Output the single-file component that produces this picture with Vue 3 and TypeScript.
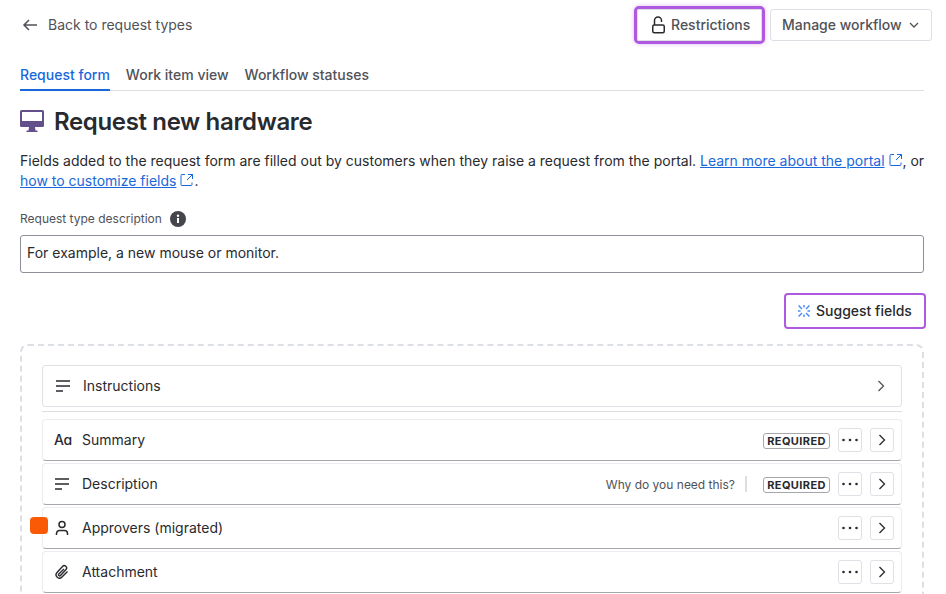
<script setup lang="ts">
interface Field { name: string; icon: string; hint?: string; required?: boolean; marker?: boolean }
const tabs = ['Request form', 'Work item view', 'Workflow statuses']
const fields: Field[] = [
  { name: 'Summary', icon: 'text', required: true },
  { name: 'Description', icon: 'lines', hint: 'Why do you need this?', required: true },
  { name: 'Approvers (migrated)', icon: 'person', marker: true },
  { name: 'Attachment', icon: 'clip' },
]
</script>

<template>
  <div class="page">
    <header class="top">
      <a class="back">
        <svg width="16" height="16" viewBox="0 0 16 16" fill="none" stroke="#505258" stroke-width="1.5"><path d="M15 8H2M7 3 2 8l5 5" /></svg>
        <span>Back to request types</span>
      </a>
      <div class="actions">
        <div class="ring">
          <button class="btn restrict">
            <svg width="16" height="18" viewBox="0 0 16 18" fill="none" stroke="#292a2e" stroke-width="1.5"><path d="M4.500 9V4.500a3.500 3.500 0 0 1 7 0V6" /><rect x="2.750" y="9" width="11.500" height="7.750" rx="1.500" /></svg>
            Restrictions
          </button>
        </div>
        <button class="btn manage">
          Manage workflow
          <svg width="12" height="12" viewBox="0 0 12 12" fill="none" stroke="#505258" stroke-width="1.3"><path d="m2 4 4 4 4-4" /></svg>
        </button>
      </div>
    </header>

    <nav class="tabs">
      <a v-for="(t, i) in tabs" :key="t" class="tab" :class="{ active: i === 0 }">{{ t }}</a>
    </nav>

    <div class="title">
      <svg width="24" height="24" viewBox="0 0 24 24"><rect x="0" y="1" width="24" height="17" rx="1.500" fill="#63508a" /><rect x="2" y="3" width="20" height="9" fill="#fff" /><path d="M9 18h6l.5 3.500h2V23h-11v-1.500h2Z" fill="#63508a" /></svg>
      <h1>Request new hardware</h1>
    </div>

    <p class="intro">
      Fields added to the request form are filled out by customers when they raise a request from the portal.
      <a class="link">Learn more about the portal</a>&nbsp;<svg class="ext" width="14" height="14" viewBox="0 0 14 14" fill="none" stroke="#1868db" stroke-width="1"><path d="M5 1.500H2A1 1 0 0 0 1 2.500v9a1 1 0 0 0 1 1h9a1 1 0 0 0 1-1V9.500M8 1.500h4.500V6M12.500 1.500 7 7" /></svg>, or
      <a class="link">how to customize fields</a>&nbsp;<svg class="ext" width="14" height="14" viewBox="0 0 14 14" fill="none" stroke="#1868db" stroke-width="1"><path d="M5 1.500H2A1 1 0 0 0 1 2.500v9a1 1 0 0 0 1 1h9a1 1 0 0 0 1-1V9.500M8 1.500h4.500V6M12.500 1.500 7 7" /></svg>.
    </p>

    <div class="label">
      Request type description
      <svg width="16" height="16" viewBox="0 0 16 16"><circle cx="8" cy="8" r="8" fill="#44464c" /><rect x="7" y="7" width="2" height="5" fill="#fff" /><circle cx="8" cy="4.800" r="1.200" fill="#fff" /></svg>
    </div>
    <div class="input">For example, a new mouse or monitor.</div>

    <div class="suggest-row">
      <button class="suggest">
        <svg width="12" height="12" viewBox="0 0 12 12" fill="none" stroke="#4c8ef5" stroke-width="1.500"><path d="M.500.500l3.500 3.500M11.500.500 8 4M.500 11.500 4 8M11.500 11.500 8 8M6 0v2.500M6 9.500V12M0 6h2.500M9.500 6H12" /></svg>
        Suggest fields
      </button>
    </div>

    <section class="canvas">
      <div class="instructions">
        <svg class="ficon" width="16" height="16" viewBox="0 0 16 16" fill="none" stroke="#292a2e" stroke-width="1.500"><path d="M1 3h14M1 8h14M1 13h7" /></svg>
        <span class="name">Instructions</span>
        <svg class="chev" width="12" height="12" viewBox="0 0 12 12" fill="none" stroke="#505258" stroke-width="1.300"><path d="m3.500 1 5 5-5 5" /></svg>
      </div>
      <div class="rule"></div>
      <div class="rows">
        <div v-for="f in fields" :key="f.name" class="row">
          <span v-if="f.marker" class="marker"></span>
          <span v-if="f.icon === 'text'" class="aa">Aɑ</span>
          <svg v-else-if="f.icon === 'lines'" class="ficon" width="16" height="16" viewBox="0 0 16 16" fill="none" stroke="#292a2e" stroke-width="1.500"><path d="M1 3h14M1 8h14M1 13h7" /></svg>
          <svg v-else-if="f.icon === 'person'" class="ficon" width="16" height="16" viewBox="0 0 16 16" fill="none" stroke="#292a2e" stroke-width="1.500"><circle cx="8" cy="4.500" r="3" /><path d="M2.500 15v-1.500a3 3 0 0 1 3-3h5a3 3 0 0 1 3 3V15" /></svg>
          <svg v-else class="ficon" width="16" height="16" viewBox="0 0 16 16" fill="none" stroke="#292a2e" stroke-width="1.400"><path d="M13.500 7.500 8 13a3.300 3.300 0 0 1-5-4.500l5.500-6a2.300 2.300 0 0 1 3.500 3l-5.500 6a1.100 1.100 0 0 1-1.700-1.500L10 5" /></svg>
          <span class="name">{{ f.name }}</span>
          <span class="right">
            <span v-if="f.hint" class="hint">{{ f.hint }}</span>
            <span v-if="f.hint" class="sep"></span>
            <span v-if="f.required" class="req">REQUIRED</span>
            <button class="sq" aria-label="More">
              <svg width="16" height="4" viewBox="0 0 16 4" fill="#292a2e"><circle cx="1.500" cy="2" r="1.300" /><circle cx="8" cy="2" r="1.300" /><circle cx="14.500" cy="2" r="1.300" /></svg>
            </button>
            <button class="sq" aria-label="Open">
              <svg width="12" height="12" viewBox="0 0 12 12" fill="none" stroke="#292a2e" stroke-width="1.300"><path d="m3.500 1 5 5-5 5" /></svg>
            </button>
          </span>
        </div>
      </div>
    </section>
  </div>
</template>

<style scoped>
.page {
  width: 946px;
  height: 594px;
  overflow: hidden;
  padding-left: 20px;
  box-sizing: border-box;
  font-family: Inter, "Liberation Sans", sans-serif;
  font-size: 14px;
  line-height: 20px;
  color: #292a2e;
  background: #fff;
}
.top {
  display: flex;
  align-items: center;
  justify-content: space-between;
  width: 912px;
  padding-top: 6px;
  height: 38px;
}
.back {
  display: flex;
  align-items: center;
  gap: 10px;
  padding-left: 2px;
  color: #505258;
}
.actions {
  display: flex;
  align-items: center;
  gap: 5px;
}
.ring {
  border: 3px solid #af59e1;
  border-radius: 5px;
  box-shadow: 0 0 4px rgba(175, 89, 225, 0.4);
}
.btn {
  display: flex;
  align-items: center;
  font: 500 14px/20px Inter, "Liberation Sans", sans-serif;
  color: #505258;
  background: #fff;
  border: 1px solid #dcdfe4;
  border-radius: 3px;
  height: 32px;
  box-sizing: border-box;
}
.restrict {
  width: 125px;
  gap: 5px;
  padding: 0 0 0 12px;
  border-radius: 2px;
}
.manage {
  width: 162px;
  gap: 6px;
  padding: 0 0 0 11px;
}
.tabs {
  display: flex;
  gap: 16px;
  margin-top: 12px;
  width: 904px;
  height: 34px;
  border-bottom: 1px solid #dddee1;
}
.tab {
  font-weight: 500;
  color: #505258;
  padding-top: 9px;
  height: 24px;
}
.tab.active {
  color: #1868db;
  border-bottom: 2px solid #1868db;
}
.title {
  display: flex;
  align-items: center;
  gap: 10px;
  margin-top: 15px;
  height: 30px;
}
h1 {
  margin: 0;
  padding-top: 2px;
  font-size: 24px;
  line-height: 30px;
  font-weight: 600;
  letter-spacing: -0.35px;
  color: #292a2e;
}
.intro {
  margin: 15px 0 0;
  width: 912px;
}
.link {
  color: #1868db;
  text-decoration: underline;
}
.ext {
  vertical-align: -1px;
}
.label {
  display: flex;
  align-items: center;
  gap: 8px;
  margin-top: 18px;
  height: 20px;
  font-size: 12px;
  font-weight: 400;
  color: #505258;
}
.input {
  margin-top: 6px;
  height: 38px;
  padding: 0 6px 3px;
  display: flex;
  align-items: center;
  border: 1px solid #8c8f97;
  border-radius: 3px;
  box-sizing: border-box;
  width: 904px;
}
.suggest-row {
  display: flex;
  justify-content: flex-end;
  width: 906px;
  margin-top: 20px;
}
.suggest {
  display: flex;
  align-items: center;
  gap: 6px;
  width: 142px;
  height: 36px;
  box-sizing: border-box;
  padding: 0 0 0 12px;
  background: #fff;
  border: 2px solid #af59e1;
  border-radius: 4px;
  font: 500 14px/20px Inter, "Liberation Sans", sans-serif;
  color: #292a2e;
}
.canvas {
  margin-top: 15px;
  width: 904px;
  box-sizing: border-box;
  padding: 19px 20px 0;
  height: 300px;
  border: 2px dashed #dcdfe4;
  border-radius: 8px;
}
.instructions {
  display: flex;
  align-items: center;
  height: 42px;
  box-sizing: border-box;
  padding: 0 14px 0 12px;
  border: 1px solid #dfe1e6;
  border-radius: 3px;
}
.instructions .name {
  margin-left: 12px;
}
.chev {
  margin-left: auto;
}
.rule {
  margin-top: 4px;
  height: 1px;
  background: #dddee1;
}
.rows {
  display: flex;
  flex-direction: column;
  gap: 2px;
  margin-top: 7px;
}
.row {
  position: relative;
  display: flex;
  align-items: center;
  height: 42px;
  box-sizing: border-box;
  padding: 0 7px 0 11px;
  border: 1px solid #ebecf0;
  border-bottom: 1px solid #a5a7ad;
  border-radius: 4px;
  background: #fff;
}
.ficon {
  flex: none;
}
.row .name {
  margin-left: 12px;
}
.aa {
  width: 16px;
  font-size: 14px;
  font-weight: 500;
  color: #292a2e;
  letter-spacing: -0.5px;
}
.marker {
  position: absolute;
  left: -13px;
  top: 9px;
  width: 18px;
  height: 17px;
  border-radius: 4px;
  background: #fa5a05;
}
.right {
  margin-left: auto;
  display: flex;
  align-items: center;
}
.hint {
  margin-top: 2px;
  font-size: 12px;
  color: #505258;
}
.sep {
  width: 2px;
  height: 16px;
  margin: 0 16px 0 10px;
  background: #dddee1;
}
.req {
  margin-top: 2px;
  font-size: 11px;
  line-height: 14px;
  font-weight: 700;
  letter-spacing: 0.4px;
  color: #292a2e;
  padding: 0;
  width: 67px;
  box-sizing: border-box;
  text-align: center;
  border: 1px solid #a5a7ad;
  border-radius: 3px;
  margin-right: 8px;
}
.sq {
  display: flex;
  align-items: center;
  justify-content: center;
  width: 24px;
  height: 24px;
  padding: 0;
  background: #fff;
  border: 1px solid #dfe1e6;
  border-radius: 3px;
}
.sq + .sq {
  margin-left: 8px;
}
</style>

<style>
html, body {
  margin: 0;
  overflow: hidden;
  background: #fff;
}
</style>
